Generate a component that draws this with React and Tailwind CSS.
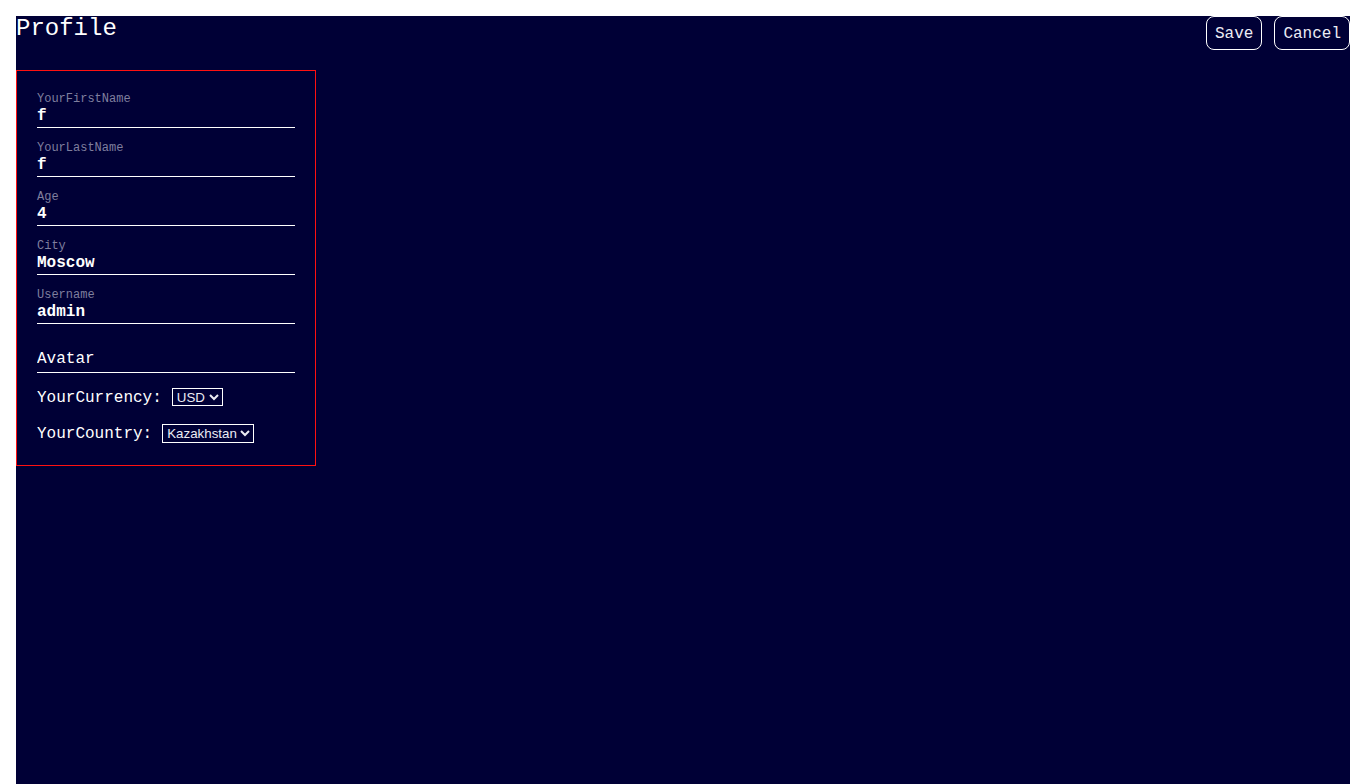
import React from "react";

const mono = { fontFamily: '"Liberation Mono", "DejaVu Sans Mono", monospace' };
const sans = { fontFamily: '"Liberation Sans", Arial, sans-serif' };

function Field({ label, value }) {
  return (
    <div className="flex flex-col">
      <div className="h-[15px] text-[12px] leading-[17px] text-[#7f7f9e]">{label}</div>
      <input
        readOnly
        defaultValue={value}
        className="h-[22px] w-full border-b border-white bg-transparent pb-[2px] text-[16px] font-bold text-white outline-none"
        style={mono}
      />
    </div>
  );
}

export default function App() {
  return (
    <div className="min-h-screen bg-white pl-4 pt-4" style={mono}>
      <div className="min-h-[768px] w-full bg-[#000036] text-white">
        <div className="flex items-start justify-between">
          <h1 className="text-[24px] leading-[26px] font-normal">Profile</h1>
          <div className="flex gap-3">
            <button className="h-[34px] rounded-lg border border-white px-2 pt-[2px] text-[16px] text-[#ececf4]" style={mono}>
              Save
            </button>
            <button className="h-[34px] rounded-lg border border-white px-2 pt-[2px] text-[16px] text-[#ececf4]" style={mono}>
              Cancel
            </button>
          </div>
        </div>
        <div className="mt-5 flex w-[300px] flex-col gap-3 border border-solid border-[#ff1010] border-r-[#ff1010] border-b-[#ff1010] px-5 pt-5 pb-5">
          <Field label="YourFirstName" value="f" />
          <Field label="YourLastName" value="f" />
          <Field label="Age" value="4" />
          <Field label="City" value="Moscow" />
          <Field label="Username" value="admin" />
          <div className="flex flex-col">
            <div className="h-[12px]" />
            <input
              readOnly
              placeholder="Avatar"
              className="h-[25px] w-full border-b border-white bg-transparent pb-[3px] text-[16px] text-white outline-none placeholder:text-white"
              style={mono}
            />
          </div>
          <div className="flex h-6 items-center gap-[10px] text-[16px]">
            <span className="pt-[2px]">YourCurrency:</span>
            <select
              defaultValue="USD"
              className="h-[18px] border border-white bg-[#000036] text-[13.33px] text-[#ececf4]"
              style={sans}
            >
              <option>USD</option>
              <option>EUR</option>
              <option>RUB</option>
            </select>
          </div>
          <div className="flex h-6 items-center gap-[10px] text-[16px]">
            <span className="pt-[2px]">YourCountry:</span>
            <select
              defaultValue="Kazakhstan"
              className="h-[19px] border border-white bg-[#000036] text-[13.33px] text-[#ececf4]"
              style={sans}
            >
              <option>Armenia</option>
              <option>Russia</option>
              <option>Belarus</option>
              <option>Kazakhstan</option>
              <option>Ukraine</option>
            </select>
          </div>
        </div>
      </div>
    </div>
  );
}
